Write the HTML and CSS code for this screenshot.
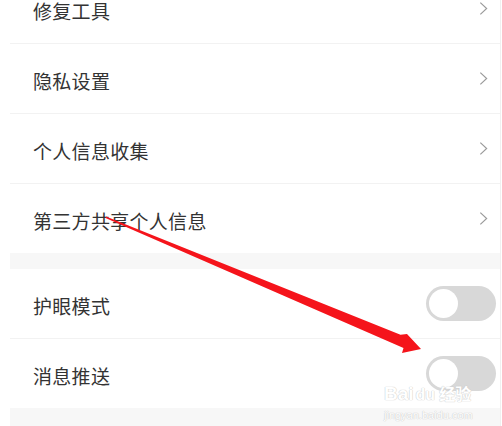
FILE: index.html
```html
<!DOCTYPE html>
<html>
<head>
<meta charset="utf-8">
<link rel="stylesheet" href="styles.css">
</head>
<body>
<div class="page">
  <div class="panel">
    <div class="group first">
      <div class="row"><span class="label">修复工具</span><svg class="chev" viewBox="0 0 10 16"><path d="M1.5 1.5 L8.5 8 L1.5 14.5" /></svg></div>
      <div class="row"><span class="label">隐私设置</span><svg class="chev" viewBox="0 0 10 16"><path d="M1.5 1.5 L8.5 8 L1.5 14.5" /></svg></div>
      <div class="row"><span class="label">个人信息收集</span><svg class="chev" viewBox="0 0 10 16"><path d="M1.5 1.5 L8.5 8 L1.5 14.5" /></svg></div>
      <div class="row last"><span class="label">第三方共享个人信息</span><svg class="chev" viewBox="0 0 10 16"><path d="M1.5 1.5 L8.5 8 L1.5 14.5" /></svg></div>
    </div>
    <div class="band"></div>
    <div class="group">
      <div class="row"><span class="label">护眼模式</span><span class="toggle"><span class="knob"></span></span></div>
      <div class="row last"><span class="label">消息推送</span><span class="toggle"><span class="knob"></span></span></div>
    </div>
    <div class="band bottom"></div>
  </div>
  <svg class="arrow" width="502" height="426" viewBox="0 0 502 426">
    <polygon points="106,216.5 400.5,334.8 407,334 421,349 402,353 403.5,348 105.5,218" fill="#f5141b"/>
  </svg>
  <div class="watermark">
    <div class="wm-top"><span class="wm-bai">Bai</span><span class="wm-du">du</span><span class="wm-jy">经验</span></div>
    <div class="wm-url">jingyan.baidu.com</div>
  </div>
</div>
</body>
</html>
```
FILE: styles.css
```css
html, body {
  margin: 0;
  padding: 0;
  background: #ffffff;
  overflow: hidden;
}
.page {
  position: relative;
  width: 502px;
  height: 426px;
  overflow: hidden;
  font-family: "Noto Sans CJK SC", "Noto Sans", sans-serif;
}
.panel {
  margin-left: 10px;
  width: 490px;
  border-right: 1px solid #f0f0f0;
  margin-top: -26px;
}
.group {
  background: #ffffff;
}
.row {
  height: 66px;
  padding-top: 3px;
  border-bottom: 1px solid #f2f2f2;
  display: flex;
  align-items: center;
  padding-left: 23px;
  padding-right: 12px;
}
.row.last {
  border-bottom: none;
}
.label {
  flex: 1;
  font-size: 19px;
  color: #333333;
  letter-spacing: 0.3px;
}
.chev {
  width: 9px;
  height: 15px;
  margin-top: -3px;
  fill: none;
  stroke: #9a9a9a;
  stroke-width: 1.3;
}
.band {
  height: 16px;
  background: #f7f7f7;
}
.band.bottom {
  height: 20px;
}
.toggle {
  width: 70px;
  height: 35px;
  margin-top: -3px;
  border-radius: 18px;
  background: #d8d8d8;
  margin-right: -8px;
  display: flex;
  align-items: center;
  padding-left: 3px;
  box-sizing: border-box;
}
.knob {
  width: 29px;
  height: 29px;
  border-radius: 50%;
  background: #ffffff;
}
.arrow {
  position: absolute;
  left: 0;
  top: 0;
}
.watermark {
  position: absolute;
  left: 384px;
  top: 383px;
  color: #ffffff;
  font-family: "Liberation Sans", sans-serif;
  text-shadow: 0 0 1px #c8c8c8, 0 0 1px #c8c8c8;
}
.wm-top {
  display: flex;
  align-items: baseline;
  font-size: 19px;
  font-weight: bold;
  line-height: 20px;
}
.wm-du {
  font-size: 16px;
  margin-left: 2px;
}
.wm-jy {
  font-family: "Noto Sans CJK SC", sans-serif;
  font-size: 16px;
  margin-left: 4px;
}
.wm-url {
  font-size: 11px;
  line-height: 14px;
  margin-top: 3px;
}
```
